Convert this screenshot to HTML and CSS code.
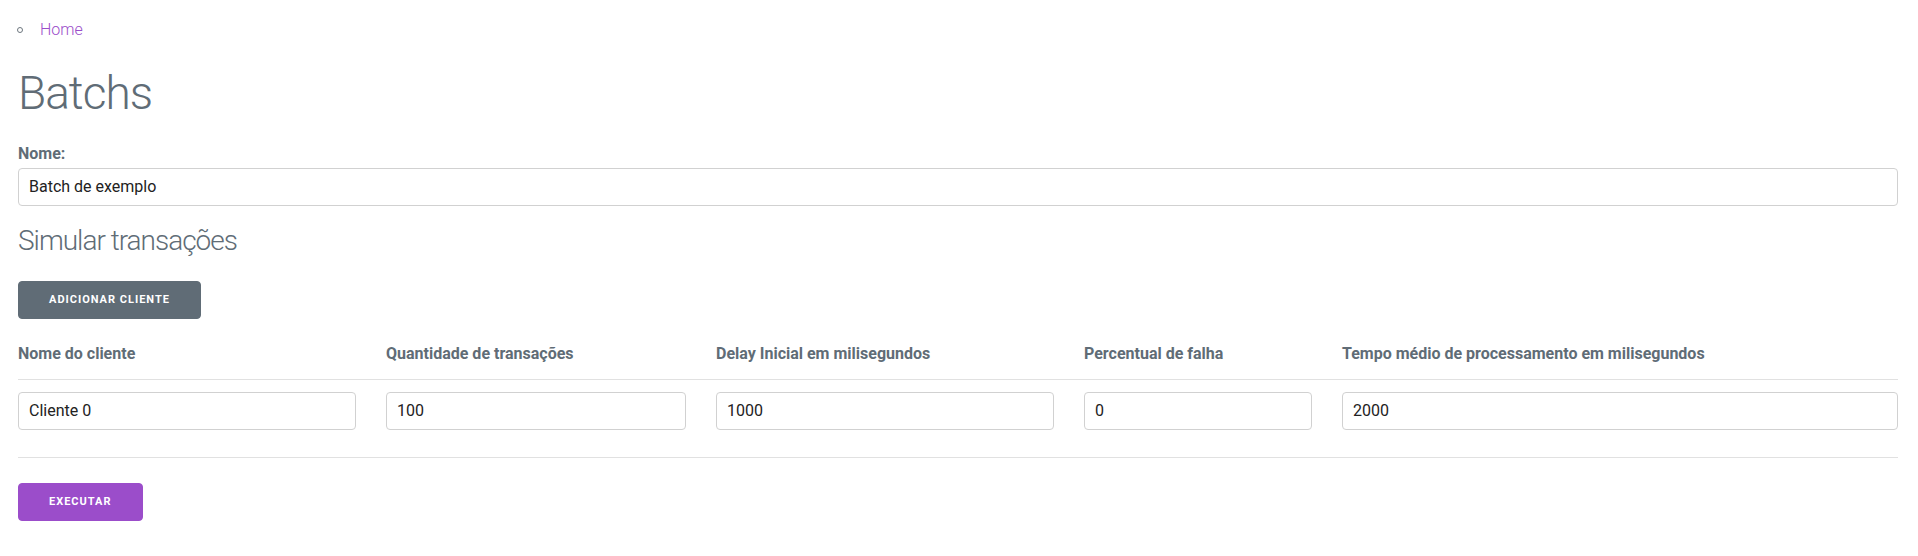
FILE: index.html
```html
<!DOCTYPE html>
<html lang="pt-BR">
<head>
<meta charset="utf-8">
<title>Batchs</title>
<link rel="stylesheet" href="styles.css">
</head>
<body>
<div class="page">
  <ul class="crumbs">
    <li><a href="#">Home</a></li>
  </ul>
  <h1 class="title">Batchs</h1>
  <form class="form">
    <div class="field">
      <label class="label" for="nome">Nome:</label>
      <input class="input" id="nome" type="text" value="Batch de exemplo">
    </div>
    <h3 class="subtitle">Simular transações</h3>
    <button type="button" class="btn btn-gray">Adicionar cliente</button>
    <table class="grid">
      <thead>
        <tr>
          <th class="c1">Nome do cliente</th>
          <th class="c2">Quantidade de transações</th>
          <th class="c3">Delay Inicial em milisegundos</th>
          <th class="c4">Percentual de falha</th>
          <th class="c5">Tempo médio de processamento em milisegundos</th>
        </tr>
      </thead>
      <tbody>
        <tr>
          <td><input class="input" type="text" value="Cliente 0"></td>
          <td><input class="input" type="text" value="100"></td>
          <td><input class="input" type="text" value="1000"></td>
          <td><input class="input" type="text" value="0"></td>
          <td><input class="input" type="text" value="2000"></td>
        </tr>
      </tbody>
    </table>
    <button type="button" class="btn btn-purple">Executar</button>
  </form>
</div>
</body>
</html>
```
FILE: styles.css
```css
*, *::before, *::after { box-sizing: border-box; }

html, body {
  margin: 0;
  padding: 0;
  background: #fff;
}

body {
  font-family: Roboto, "Liberation Sans", Arial, sans-serif;
  font-size: 16px;
  font-weight: 300;
  line-height: 1.6;
  color: #606c76;
}

.page {
  padding: 17px 20px 0 18px;
}

.crumbs {
  list-style: none;
  margin: 0 0 23.4px;
  padding: 0;
}

.crumbs li {
  display: flex;
  align-items: center;
  height: 25.6px;
}

.crumbs li::before {
  content: "";
  width: 6px;
  height: 6px;
  border: 1px solid #6d767e;
  border-radius: 50%;
  margin-right: 17px;
  margin-left: -1px;
  margin-top: 1px;
}

.crumbs a {
  color: #9b4dca;
  text-decoration: none;
}

.title {
  font-size: 46px;
  font-weight: 300;
  letter-spacing: -1px;
  line-height: 1.2;
  margin: 0 0 20px;
}

.form { margin: 0; }

.field { margin-bottom: 17px; }

.label {
  display: block;
  font-weight: 700;
  margin-bottom: 1.2px;
}

.input {
  display: block;
  width: 100%;
  height: 38px;
  margin: 0;
  padding: 6px 10px 7px;
  border: 1px solid #d1d1d1;
  border-radius: 4px;
  background: transparent;
  font-family: Roboto, "Liberation Sans", Arial, sans-serif;
  font-size: 16px;
  font-weight: 400;
  color: #222;
  outline: none;
}

.subtitle {
  font-size: 28px;
  font-weight: 300;
  letter-spacing: -1px;
  line-height: 1.3;
  margin: 0 0 21.6px;
}

.btn {
  display: block;
  height: 38px;
  padding: 0 30px;
  border-radius: 4px;
  color: #fff;
  font-family: Roboto, "Liberation Sans", Arial, sans-serif;
  font-size: 11px;
  font-weight: 700;
  letter-spacing: 1px;
  line-height: 36px;
  text-transform: uppercase;
  white-space: nowrap;
  cursor: pointer;
}

.btn-gray {
  background: #606c76;
  border: 1px solid #606c76;
  margin-bottom: 10px;
}

.btn-purple {
  background: #9b4dca;
  border: 1px solid #9b4dca;
}

.grid {
  width: 100%;
  table-layout: fixed;
  border-spacing: 0;
  text-align: left;
  margin-bottom: 25px;
}

.grid th, .grid td {
  border-bottom: 1px solid #e1e1e1;
  padding: 12px 15px;
}

.grid th {
  font-weight: 700;
}

.grid td .input { margin-bottom: 15px; }

.grid th:first-child, .grid td:first-child { padding-left: 0; }
.grid th:last-child, .grid td:last-child { padding-right: 0; }

.c1 { width: 353px; }
.c2 { width: 330px; }
.c3 { width: 368px; }
.c4 { width: 258px; }
.c5 { width: auto; }
```
